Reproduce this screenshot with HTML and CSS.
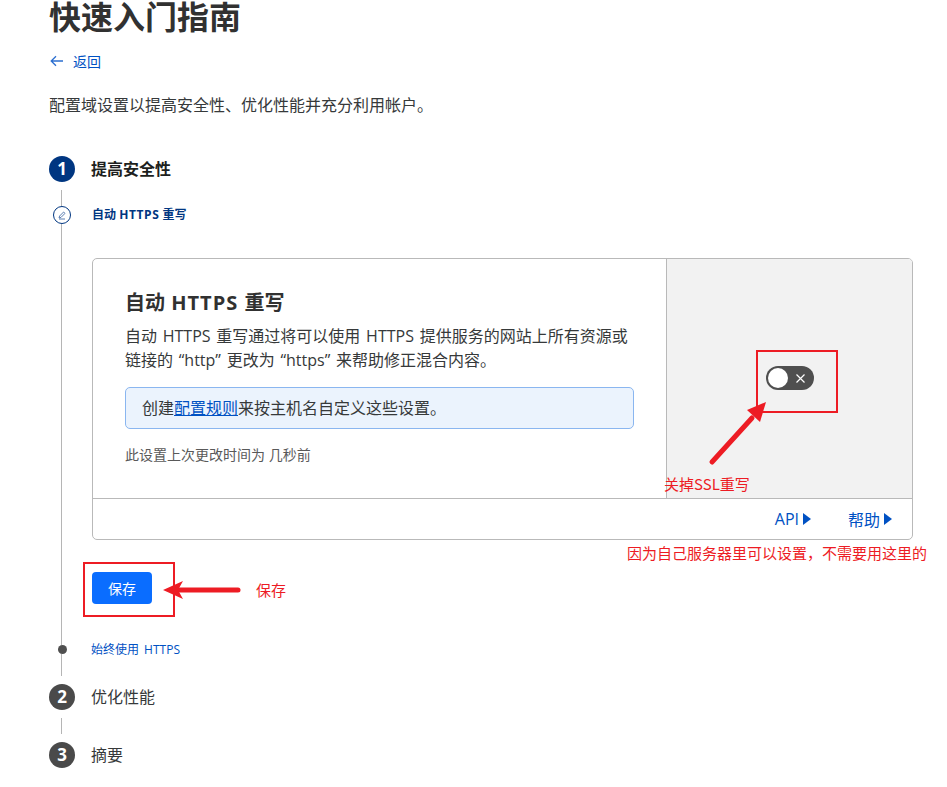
FILE: index.html
```html
<!DOCTYPE html>
<html lang="zh-CN">
  <head>
    <meta charset="UTF-8" />
    <meta name="viewport" content="width=device-width, initial-scale=1.0" />
    <title>快速入门指南</title>
    <link rel="stylesheet" href="styles.css">
  </head>
  <body>
    <div class="page">
      <h1>快速入门指南</h1>
      <a class="back" href="#">
        <svg width="14" height="12" viewBox="0 0 14 12"><path d="M13 6H1.5M6 1.2 1.2 6 6 10.8" fill="none" stroke="#2c6fd0" stroke-width="1.3"/></svg>
        <span>返回</span>
      </a>
      <p class="intro">配置域设置以提高安全性、优化性能并充分利用帐户。</p>

      <div class="steps">
        <!-- step 1 -->
        <div class="rail"><span class="num active">1</span></div>
        <div class="step-title active-title">提高安全性</div>

        <div class="rail"><span class="line short"></span></div>
        <div></div>

        <div class="rail"><span class="sub-circle">
          <svg width="10" height="10" viewBox="0 0 10 10"><path d="M2 8 2.6 6 6.6 2 8 3.4 4 7.4 2 8ZM2 9H8" fill="none" stroke="#4a6fa8" stroke-width="0.9"/></svg>
        </span></div>
        <div class="sub-title">自动 <span class="en">HTTPS</span> 重写</div>

        <div class="rail"><span class="line grow"></span></div>
        <div class="step-body">
          <div class="card">
            <div class="card-main">
              <div class="card-text">
                <h2>自动 <span class="en">HTTPS</span> 重写</h2>
                <p class="desc">自动 HTTPS 重写通过将可以使用 HTTPS 提供服务的网站上所有资源或链接的 “http” 更改为 “https” 来帮助修正混合内容。</p>
                <div class="callout">创建<a href="#">配置规则</a>来按主机名自定义这些设置。</div>
                <p class="changed">此设置上次更改时间为 几秒前</p>
              </div>
              <div class="card-side">
                <span class="toggle">
                  <span class="knob"></span>
                  <svg class="cross" width="9" height="9" viewBox="0 0 9 9"><path d="M.5.5l8 8M8.5.5l-8 8" stroke="#fff" stroke-width="1.2" fill="none"/></svg>
                </span>
              </div>
            </div>
            <div class="card-foot">
              <a href="#">API<i class="tri"></i></a>
              <a href="#">帮助<i class="tri"></i></a>
            </div>
          </div>
          <button class="save">保存</button>
        </div>

        <div class="rail"><span class="dot"></span></div>
        <div class="sub-link"><a href="#">始终使用 HTTPS</a></div>

        <div class="rail"><span class="line tail"></span></div>
        <div></div>

        <!-- step 2 -->
        <div class="rail"><span class="num">2</span></div>
        <div class="step-title">优化性能</div>

        <div class="rail"><span class="line link"></span></div>
        <div></div>

        <!-- step 3 -->
        <div class="rail"><span class="num">3</span></div>
        <div class="step-title">摘要</div>
      </div>
    </div>

    <!-- red screenshot notes drawn over the page -->
    <div class="notes">
      <div class="box box-toggle"></div>
      <div class="box box-save"></div>
      <svg class="arrows" width="947" height="787" viewBox="0 0 947 787">
        <path d="M712 462 752 418" stroke="#ed1c24" stroke-width="5" stroke-linecap="round" fill="none"/>
        <path d="M766 402 747 410 760 422Z" fill="#ed1c24"/>
        <path d="M178 590H238" stroke="#ed1c24" stroke-width="5" stroke-linecap="round" fill="none"/>
        <path d="M163 590 183 581 178 590 183 599Z" fill="#ed1c24"/>
      </svg>
      <span class="note note-ssl">关掉SSL重写</span>
      <span class="note note-why">因为自己服务器里可以设置，不需要用这里的</span>
      <span class="note note-save">保存</span>
    </div>
  </body>
</html>
```

FILE: styles.css
```css
* {
  margin: 0;
  padding: 0;
  box-sizing: border-box;
}

body {
  font-family: "Open Sans", "Noto Sans CJK SC", sans-serif;
  background-color: #fff;
  color: #36393a;
  position: relative;
  overflow: hidden;
  height: 787px;
}

a {
  color: #0051c3;
  text-decoration: none;
}

.page {
  padding-left: 49px;
  width: 913px;
}

h1 {
  font-size: 32px;
  line-height: 34px;
  font-weight: 700;
  color: #313131;
}

.back {
  display: flex;
  align-items: center;
  gap: 9px;
  margin-top: 17px;
  height: 20px;
  padding-left: 1px;
  font-size: 14px;
}

.intro {
  margin-top: 22px;
  font-size: 16px;
  line-height: 24px;
}

/* steps: one column for the rail, one for the content */
.steps {
  display: grid;
  grid-template-columns: 26px 1fr;
  column-gap: 16px;
  margin-top: 39px;
}

.rail {
  display: flex;
  flex-direction: column;
  align-items: center;
}

.num {
  width: 26px;
  height: 26px;
  border-radius: 50%;
  background-color: #4a4a4a;
  color: #fff;
  font-size: 17px;
  font-weight: 700;
  line-height: 26px;
  text-align: center;
}

.num.active {
  background-color: #003681;
}

.line {
  display: block;
  width: 1px;
  margin-right: 1px;
  background-color: #b5b5b5;
}

.line.short {
  height: 16px;
  margin-top: 8px;
}

.line.grow {
  flex: 1;
}

.line.tail {
  height: 22px;
  margin-bottom: 8px;
}

.line.link {
  height: 16px;
  margin-top: 8px;
  margin-bottom: 8px;
}

.sub-circle {
  width: 18px;
  height: 18px;
  border: 1px solid #003681;
  border-radius: 50%;
  display: flex;
  align-items: center;
  justify-content: center;
}

.dot {
  width: 9px;
  height: 9px;
  border-radius: 50%;
  background-color: #4f4f4f;
}

.step-title {
  font-size: 16px;
  line-height: 26px;
}

.active-title {
  font-weight: 700;
  color: #1d1f20;
}

.sub-title {
  font-size: 12px;
  line-height: 18px;
  font-weight: 700;
  color: #003681;
  padding-left: 1px;
}

.sub-title .en {
  letter-spacing: 0.6px;
}

.sub-link {
  font-size: 12px;
  line-height: 9px;
  word-spacing: 2px;
}

.step-body {
  padding: 34px 0 41px 1px;
}

.card {
  width: 821px;
  height: 282px;
  border: 1px solid #b9b9b9;
  border-radius: 5px;
  display: flex;
  flex-direction: column;
}

.card-main {
  display: flex;
  height: 240px;
  border-bottom: 1px solid #b9b9b9;
}

.card-text {
  width: 574px;
  padding: 29px 32px 0;
  border-right: 1px solid #b9b9b9;
}

h2 {
  font-size: 20px;
  line-height: 30px;
  font-weight: 700;
  color: #313131;
  word-spacing: 1px;
}

h2 .en {
  letter-spacing: 1px;
}

.desc {
  font-size: 16px;
  line-height: 24px;
  margin-top: 6px;
  word-spacing: 1.6px;
}

.callout {
  margin-top: 15px;
  height: 42px;
  padding-left: 16px;
  border: 1px solid #8ab6f0;
  border-radius: 5px;
  background-color: #ebf3fd;
  font-size: 16px;
  line-height: 40px;
}

.callout a {
  text-decoration: underline;
}

.changed {
  margin-top: 16px;
  font-size: 14px;
  line-height: 20px;
  color: #595959;
}

.card-side {
  flex: 1;
  background-color: #f2f2f2;
  border-top-right-radius: 4px;
  display: flex;
  align-items: flex-start;
  padding: 107px 0 0 99px;
}

.toggle {
  width: 48px;
  height: 24px;
  border-radius: 12px;
  background-color: #4f4f4f;
  position: relative;
  display: block;
}

.knob {
  position: absolute;
  top: 2px;
  left: 2px;
  width: 20px;
  height: 20px;
  border-radius: 50%;
  background-color: #fff;
}

.cross {
  position: absolute;
  left: 30px;
  top: 8px;
}

.card-foot {
  flex: 1;
  display: flex;
  justify-content: flex-end;
  align-items: center;
  gap: 37px;
  padding-right: 20px;
  font-size: 16px;
}

.card-foot a {
  display: flex;
  align-items: center;
  gap: 4px;
}

.tri {
  width: 0;
  height: 0;
  border-left: 8px solid #0051c3;
  border-top: 6.5px solid transparent;
  border-bottom: 6.5px solid transparent;
}

.save {
  display: block;
  margin-top: 32px;
  width: 60px;
  height: 32px;
  border: none;
  border-radius: 4px;
  background-color: #0a6dff;
  color: #fff;
  font-family: inherit;
  font-size: 14px;
}

/* notes */
.notes {
  position: absolute;
  top: 0;
  left: 0;
  width: 947px;
  height: 787px;
  pointer-events: none;
}

.arrows {
  position: absolute;
  top: 0;
  left: 0;
}

.box {
  position: absolute;
  border: 2px solid #ed1c24;
}

.box-toggle {
  left: 756px;
  top: 350px;
  width: 82px;
  height: 63px;
}

.box-save {
  left: 83px;
  top: 562px;
  width: 92px;
  height: 55px;
}

.note {
  position: absolute;
  color: #ed1c24;
  font-family: "Noto Sans CJK SC", sans-serif;
  font-size: 15px;
  line-height: 20px;
  white-space: nowrap;
}

.note-ssl {
  left: 664px;
  top: 474px;
}

.note-why {
  left: 627px;
  top: 543px;
}

.note-save {
  left: 256px;
  top: 580px;
}
```
